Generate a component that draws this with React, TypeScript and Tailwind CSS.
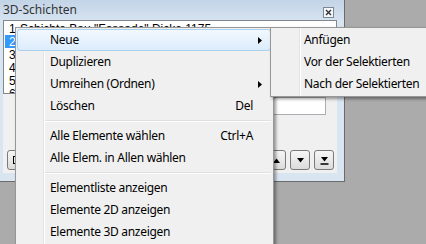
import React from 'react';

type MenuEntry =
  | { sep: true }
  | { sep?: false; label: string; shortcut?: string; sub?: boolean; active?: boolean };

const mainItems: MenuEntry[] = [
  { label: 'Neue', sub: true, active: true },
  { label: 'Duplizieren' },
  { label: 'Umreihen (Ordnen)', sub: true },
  { label: 'Löschen', shortcut: 'Del' },
  { sep: true },
  { label: 'Alle Elemente wählen', shortcut: 'Ctrl+A' },
  { label: 'Alle Elem. in Allen wählen' },
  { sep: true },
  { label: 'Elementliste anzeigen' },
  { label: 'Elemente 2D anzeigen' },
  { label: 'Elemente 3D anzeigen' },
];

const subItems = ['Anfügen', 'Vor der Selektierten', 'Nach der Selektierten'];

// only the first row is visible above the menu
const listRows = [
  { n: '1', text: 'Schichte Bau "Fassade" Dicke 1175' },
  { n: '2', text: '', selected: true },
  { n: '3', text: '' },
  { n: '4', text: '' },
  { n: '5', text: '' },
  { n: '6', text: '' },
];

const Arrow = () => (
  <svg width="4" height="7" viewBox="0 0 4 7">
    <path d="M0 0 L4 3.5 L0 7 Z" fill="#000" />
  </svg>
);

const MenuItem = ({ item }: { item: Exclude<MenuEntry, { sep: true }> }) => (
  <div
    className={`h-[22px] flex items-center pl-[32px] rounded-[3px] border ${
      item.active
        ? 'border-[#a8d2ef] bg-gradient-to-b from-[#f2f8fd] to-[#dcecfc]'
        : 'border-transparent'
    }`}
  >
    <span className="flex-1 text-black">{item.label}</span>
    {item.shortcut && <span className="text-black">{item.shortcut}</span>}
    <span className="w-[17px] flex items-center pl-[5px]">{item.sub && <Arrow />}</span>
  </div>
);

const ToolButton = ({ children }: { children?: React.ReactNode }) => (
  <div className="w-[20px] h-[20px] rounded-[3px] border border-[#7a7a7a] bg-gradient-to-b from-[#f6f6f6] to-[#dcdcdc] flex items-center justify-center">
    {children}
  </div>
);

export default function App() {
  return (
    <div className="relative w-[426px] h-[244px] overflow-hidden bg-[#ababab] font-['Noto_Sans',sans-serif] text-[12px] leading-none tracking-[-0.3px]">
      {/* Fenster 3D-Schichten */}
      <div className="w-[345px] h-[182px] bg-[#dae5f2] border-r border-b border-[#6b6b6b] flex flex-col">
        <div className="h-[20px] flex items-start justify-between pl-[3px] pr-[10px] bg-gradient-to-b from-[#c3d4e7] to-[#d5e2f0]">
          <span className="mt-[4px] text-[#333] tracking-normal">3D-Schichten</span>
          <div className="mt-[7px] w-[11px] h-[11px] border border-[#7d8894] bg-[#f4f7fb] flex items-center justify-center">
            <svg width="7" height="7" viewBox="0 0 7 7">
              <path d="M1 1 L6 6 M6 1 L1 6" stroke="#333" strokeWidth="1.4" />
            </svg>
          </div>
        </div>

        <div className="flex-1 mx-[3px] w-[334px] flex flex-col bg-[#f0f0f0] mb-[8px]">
          {/* Liste */}
          <div className="h-[74px] border border-[#828790] bg-white pt-[1px] overflow-hidden font-['Liberation_Sans',sans-serif] tracking-normal">
            {listRows.map((r) => (
              <div
                key={r.n}
                className={`h-[13px] ml-[1px] flex items-center pl-[4px] whitespace-nowrap ${
                  r.selected ? 'bg-[#3399ff] text-white' : 'text-black'
                }`}
              >
                <span className="w-[11px]">{r.n}</span>
                <span>{r.text}</span>
              </div>
            ))}
          </div>

          <div className="mt-[3px] flex justify-end pr-[11px]">
            <div className="w-[220px] h-[18px] border border-[#abadb3] bg-white" />
          </div>

          <div className="mt-[35px] flex items-center pl-[4px] pr-[3px]">
            <ToolButton>
              <div className="w-[8px] h-[8px] border border-black" />
            </ToolButton>
            <div className="flex-1" />
            <div className="flex gap-[4px]">
              <ToolButton>
                <svg width="9" height="9" viewBox="0 0 9 9">
                  <path d="M0.5 1 H8.5" stroke="#000" strokeWidth="1.5" />
                  <path d="M1 8 L4.5 3.5 L8 8 Z" fill="#000" />
                </svg>
              </ToolButton>
              <ToolButton>
                <svg width="9" height="5" viewBox="0 0 9 5">
                  <path d="M1 5 L4.5 0.5 L8 5 Z" fill="#000" />
                </svg>
              </ToolButton>
              <ToolButton>
                <svg width="9" height="5" viewBox="0 0 9 5">
                  <path d="M1 0 L4.5 4.5 L8 0 Z" fill="#000" />
                </svg>
              </ToolButton>
              <ToolButton>
                <svg width="9" height="9" viewBox="0 0 9 9">
                  <path d="M1 1 L4.5 5.5 L8 1 Z" fill="#000" />
                  <path d="M0.5 8 H8.5" stroke="#000" strokeWidth="1.5" />
                </svg>
              </ToolButton>
            </div>
          </div>
        </div>
      </div>

      {/* Kontextmenü */}
      <div className="absolute left-[15px] top-[27px] w-[259px] border border-[#979797] pt-[1px] pl-[1px] pr-[2px] pb-[2px] shadow-[2px_2px_3px_rgba(0,0,0,0.4)] bg-[#f0f0f0] bg-[linear-gradient(to_right,#f0f0f0_27px,#e2e3e3_27px,#e2e3e3_28px,#ffffff_28px,#ffffff_29px,#f0f0f0_29px)]">
        {mainItems.map((item, i) =>
          item.sep ? (
            <div key={i} className="h-[8px] flex flex-col justify-center pl-[28px]">
              <div className="h-[1px] bg-[#e0e0e0]" />
              <div className="h-[1px] bg-white" />
            </div>
          ) : (
            <MenuItem key={i} item={item} />
          )
        )}
      </div>

      {/* Untermenü */}
      <div className="absolute left-[270px] top-[27px] w-[160px] border border-[#979797] pt-[1px] pl-[1px] pb-[1px] shadow-[2px_2px_3px_rgba(0,0,0,0.4)] bg-[#f0f0f0] bg-[linear-gradient(to_right,#f0f0f0_28px,#e2e3e3_28px,#e2e3e3_29px,#ffffff_29px,#ffffff_30px,#f0f0f0_30px)]">
        {subItems.map((s) => (
          <div key={s} className="h-[22px] flex items-center pl-[32px] text-black whitespace-nowrap">
            {s}
          </div>
        ))}
      </div>
    </div>
  );
}
